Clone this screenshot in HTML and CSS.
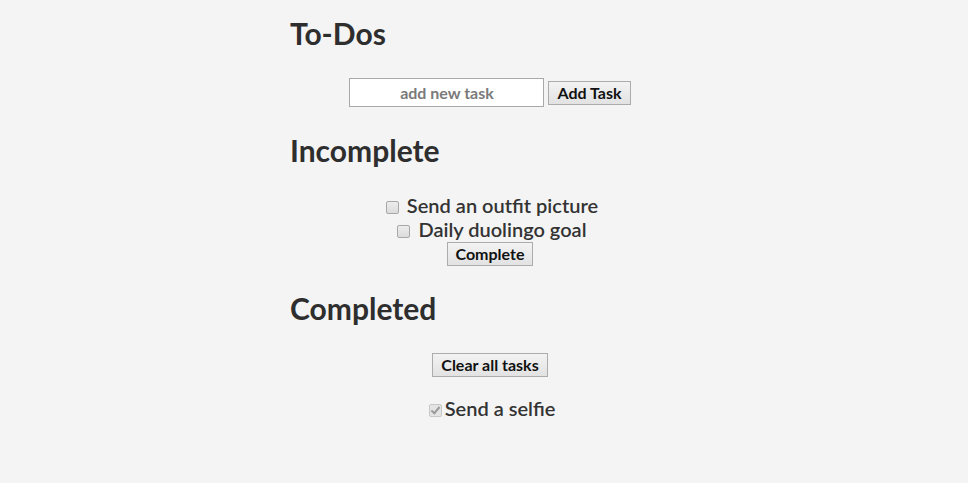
FILE: index.html
```html
<!DOCTYPE html>
<html>
<head>
<meta charset="utf-8">
<link rel="stylesheet" href="styles.css">
</head>
<body>
<main class="todo">
  <h2 class="title">To-Dos</h2>
  <form class="add-row">
    <input class="task-input" type="text" placeholder="add new task">
    <button class="btn" type="button">Add Task</button>
  </form>

  <h2 class="title">Incomplete</h2>
  <ul class="list">
    <li class="item"><input class="check" type="checkbox"> Send an outfit picture</li>
    <li class="item"><input class="check" type="checkbox"> Daily duolingo goal</li>
  </ul>
  <div class="actions"><button class="btn" type="button">Complete</button></div>

  <h2 class="title">Completed</h2>
  <div class="actions clear"><button class="btn" type="button">Clear all tasks</button></div>
  <ul class="list done">
    <li class="item"><input class="check" type="checkbox" checked disabled>Send a selfie</li>
  </ul>
</main>
</body>
</html>
```

FILE: styles.css
```css
html, body {
  margin: 0;
  background: #f4f4f4;
}
body {
  font-family: Lato, "Liberation Sans", sans-serif;
  color: #333;
}
.todo {
  width: 400px;
  margin-left: calc(50% - 194px);
  text-align: center;
  padding-top: 15px;
}
.title {
  text-align: left;
  font-size: 30px;
  font-weight: 700;
  line-height: 36px;
  margin: 0;
  color: #2e2e2e;
}
.add-row {
  display: flex;
  justify-content: center;
  align-items: center;
  gap: 4px;
  margin: 27px 0 25px;
}
.task-input {
  width: 195px;
  height: 29px;
  box-sizing: border-box;
  border: 1px solid #a9a9a9;
  background: #fff;
  font-family: Lato, sans-serif;
  font-size: 16px;
  font-weight: 700;
  text-align: center;
  padding: 0;
  outline: none;
}
.task-input::placeholder {
  color: #7a7a7a;
}
.btn {
  font-family: Lato, sans-serif;
  font-size: 16px;
  font-weight: 700;
  color: #111;
  height: 24px;
  padding: 0 8px;
  border: 1px solid #acacac;
  border-radius: 0;
  background: linear-gradient(#f3f3f3, #e2e2e2);
  line-height: 22px;
}
.list {
  list-style: none;
  margin: 25px 0 0;
  padding: 0;
}
.item {
  font-size: 20px;
  font-weight: 600;
  line-height: 24px;
  color: #333;
}
.check {
  appearance: none;
  -webkit-appearance: none;
  width: 13px;
  height: 13px;
  margin: 0 3px 0 4px;
  border: 1px solid #a8a8a8;
  border-radius: 2px;
  background: linear-gradient(#ececec, #dcdcdc);
  vertical-align: -1px;
  position: relative;
}
.check:checked::after {
  content: "";
  position: absolute;
  left: 3px;
  top: 0;
  width: 3px;
  height: 7px;
  border: solid #9a9a9a;
  border-width: 0 2px 2px 0;
  transform: rotate(40deg);
}
.check:disabled {
  background: #e4e4e4;
  border-color: #c8c8c8;
}
.actions {
  margin-top: 1px;
  margin-bottom: 24px;
}
.actions.clear {
  margin-top: 27px;
  margin-bottom: 0;
}
.done {
  margin-top: 19px;
}
```
